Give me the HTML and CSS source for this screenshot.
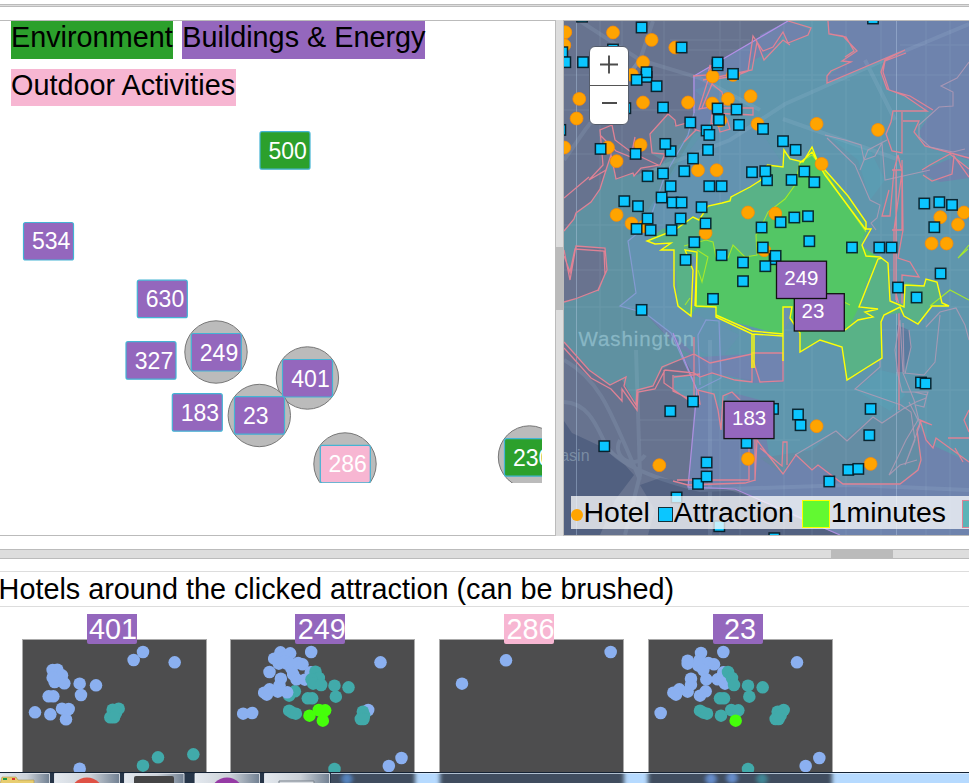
FILE: index.html
```html
<!DOCTYPE html>
<html lang="en">
<head>
<meta charset="utf-8">
<title>Attractions and hotels</title>
<link rel="stylesheet" href="styles.css">
</head>
<body>
<svg class="defs" width="0" height="0">
  <defs>
    <marker id="hotel" markerUnits="userSpaceOnUse" markerWidth="16" markerHeight="16" viewBox="-8 -8 16 16"><circle cx=".3" cy=".2" r="6.4" fill="#ffa400" stroke="#ff8c00" stroke-opacity=".8"/></marker>
    <marker id="sight" markerUnits="userSpaceOnUse" markerWidth="14" markerHeight="14" viewBox="-7 -7 14 14"><rect x="-4.900" y="-5" width="10.400" height="10.400" fill="#0bc6ff" stroke="#001018" stroke-opacity=".85" stroke-width="1.500"/></marker>
    <marker id="far" markerUnits="userSpaceOnUse" markerWidth="40" markerHeight="40" viewBox="-20 -20 40 40"><circle r="18.8" fill="#8bb0f0"/></marker>
    <marker id="mid" markerUnits="userSpaceOnUse" markerWidth="40" markerHeight="40" viewBox="-20 -20 40 40"><circle r="18.8" fill="#41aaaa"/></marker>
    <marker id="near" markerUnits="userSpaceOnUse" markerWidth="40" markerHeight="40" viewBox="-20 -20 40 40"><circle r="18.8" fill="#45ff0a"/></marker>
  </defs>
</svg>
<div class="top-split"></div>
<main class="views">
  <section class="graph">
    <div class="cats"><span class="cat green">Environment</span><span class="cat purple">Buildings &amp; Energy</span><span class="cat pink">Outdoor Activities</span></div>
    <svg class="nodes" width="542" height="377" viewBox="0 106 542 377">
      <g class="halo"><circle cx="216" cy="352" r="31.2"/><circle cx="307.4" cy="378" r="31.2"/><circle cx="259.3" cy="415.5" r="31.2"/><circle cx="345" cy="464" r="31.2"/><circle cx="529.5" cy="457" r="31.2"/></g>
      <g class="box purple-f">
        <rect x="23.5" y="222.5" width="50" height="37.5" rx="2"/><rect x="137.3" y="280.2" width="50" height="37.5" rx="2"/><rect x="126" y="341.7" width="50" height="37.5" rx="2"/><rect x="172.3" y="393.7" width="50" height="37.5" rx="2"/>
        <rect x="191.3" y="333.5" width="50" height="37.5" rx="2"/><rect x="282.5" y="359.5" width="50" height="37.5" rx="2"/><rect x="234.5" y="396.7" width="50" height="37.5" rx="2"/>
      </g>
      <g class="box green-f"><rect x="260" y="131.7" width="50" height="37.5" rx="2"/><rect x="504.5" y="438.7" width="50" height="37.5" rx="2"/></g>
      <g class="box pink-f"><rect x="320.3" y="445.3" width="50" height="37.5" rx="2"/></g>
      <g class="num">
        <text x="268.4" y="159">500</text><text x="32" y="249">534</text><text x="145.8" y="307">630</text><text x="134.8" y="369">327</text><text x="180.7" y="421">183</text><text x="199.8" y="360.7">249</text><text x="291.3" y="386.7">401</text><text x="243" y="423.7">23</text><text x="328.5" y="471.7">286</text><text x="513" y="465.7">230</text>
      </g>
    </svg>
  </section>
  <div class="v-split"><i></i></div>
  <section class="map">
    <svg class="canvas" width="405" height="514" viewBox="564 21 405 514">
      <rect x="564" y="21" width="405" height="514" fill="#67738f"/>
      <path fill="#516080" d="M564 421L572 433L600 446L625 465L634 475L615 500L600 535L564 535Z"/>
      <path fill="#536282" d="M648 535L655 510L640 485L660 478L720 487L760 500L850 535Z"/>
      <path fill="#6e83ad" d="M788 21L693 76L694 130L665 175L648 225L628 241L636 293L620 306L645 313L675 345L696 378L694 410L688 490L735 488L790 515L840 535L969 535L969 21Z"/>
      <path fill="#5f91a1" d="M564 231L574 219L576 213L591 202L600 189L606 170L611 158L616 179L633 173L634 176L660 166L683 139L693 131L700 132L694 175L660 222L628 241L636 293L620 306L645 313L675 345L690 354L662 369L653 386L636 392L637 405L622 380L610 385L590 370L564 342Z"/>
      <path fill="#66869b" d="M652 154L651 134L668 114L675 120L674 125L690 122L693 132L662 160Z"/>
      <path fill="#5f96ad" d="M706 128L694 134L664 185L628 241L636 293L620 306L645 313L685 345L694 354L710 363L752 354L752 380L783 382L783 362L784 382L752 383L745 380L720 373L700 377L673 375L674 391L700 404L697 390L710 393L721 410L730 392L760 400L770 460L783 474L795 455L810 469L820 465L845 484L900 484L918 470L922 460L917 425L932 445L969 462L969 160L950 154L925 146L919 132L933 110L927 111L905 96L886 89L881 72L886 60L905 50L827 83L827 76L848 63L842 61L857 51L843 36L829 34L828 21L788 21L810 30L808 35L788 43L783 35L773 50L754 60L746 72L732 76L718 79L712 88L722 93L717 107Z"/>
      <path fill="#6591b2" d="M694 90L712 84L722 92L717 107L706 128L670 178L648 225L628 241L636 293L620 306L645 313L685 345L720 360L740 335L678 306L674 249L647 241L693 217L730 198L760 180L780 160L760 130L730 120Z" opacity=".6"/>
      <path fill="#6f83ac" d="M922 170L940 163L954 157L969 168L969 178L940 182L925 175ZM788 21L810 30L808 35L788 43L783 35L773 50L762 50L760 35Z"/>
      <path fill="#67899f" d="M760 458L812 450L836 431L845 439L873 417L882 423L900 411L913 405L917 430L921 465L900 484L845 484L820 465L810 469L795 455L783 474Z" opacity=".7"/>
      <path fill="#69738f" d="M564 250L570 272L576 246L605 248L607 270L598 290L575 299L564 302Z"/>
      <path fill="#7084b0" d="M752 354L783 353L783 382L754 383ZM700 357L752 354L752 380L710 373Z"/>
      <path fill="#58a0b5" d="M855 390L880 370L897 374L905 395L890 411L870 399ZM828 136L870 150L885 180L870 200L858 160Z" opacity=".6"/>
      <path fill="#5b7b9f" d="M897 325L909 330L911 347L904 372L896 372Z"/>
      <g class="street">
        <path class="wide" d="M580 21L640 60L700 78L760 110M653 21L640 60L585 130L564 160M969 24L900 53L785 104L730 140L640 175M783 119L900 160M865 60L895 120"/>
        <path class="wide" d="M640 60L610 100M564 402C590 403 598 430 606 445S640 475 700 490L850 485L969 490M625 535L640 475L636 350M564 360C600 380 610 410 640 480M710 340V535M620 440A12 12 0 1 0 645 455"/>
        <path d="M600 21V340M622 21V340M664 21V340M720 21V535M740 21V535M784 21V535M812 21V535M846 21V535M881 21V535M926 21V535M950 21V535M564 75H969M564 110H700M564 154H969M740 80H850M564 307H969M620 390H969M640 440H800M564 270H969M760 235H969M640 420H760M564 225H800M670 40H750M670 50H750M900 45H969M760 330H969"/>
        <path class="seam" d="M576.500 21V535M896.500 21V535"/>
      </g>
      <g class="place"><text x="578.5" y="346" font-size="20.500">Washington</text><text x="549.500" y="460.500" font-size="16" class="water">Basin</text></g>
      <g class="violet">
        <path d="M788 21L694 76V113" stroke="#b48fe6"/>
        <path d="M694 113L688 135L665 175L648 225L628 241L636 293L620 306L645 313L671 333L697 390L721 378L719 321L706 320L698 335L700 385" stroke="#849bd2"/>
        <path d="M673 333L697 390L688 487L735 489L760 500L840 535" stroke="#ae8fdf"/>
      </g>
      <g class="rose">
        <path d="M589 180L603 165L600 130L612 125M589 180L606 170L611 155L616 179L633 173L634 176L641 168L660 165L665 154L652 153L650 134L668 114L675 120L676 126L690 122L696 130M600 135L616 151L631 157L635 137M612 125L615 140L631 152L658 165"/>
        <path d="M693 76L708 75L710 65L714 79L702 108L712 84L722 92L724 105L699 109L708 80L735 76L748 71L753 36L763 51L773 47L783 32L788 43L808 35L811 28L788 21M703 80L752 70L757 42L764 60L783 40L790 45M717 108L753 108V115L712 113L711 124L727 119L730 129L720 132L715 115M684 142L696 130L703 132"/>
        <path d="M828 21L829 34L843 36L857 51L842 61L851 62L831 71L827 76L827 83L905 50L885 60L881 72L887 89L905 96L927 111L893 111L891 122L886 134L892 151L902 153V112M906 53L885 61L883 72L889 90L910 96L933 110M830 34L846 37L854 51L845 57"/>
        <path d="M903 121L919 121L914 132L925 146L969 158M922 170L930 165L950 154L969 169M969 177L954 156L952 174L932 181L923 175"/>
        <path d="M889 190L882 216H890L894 170L898 155L902 172L894 230V286L899 305V410M902 160L903 230L898 258L910 262L919 277L902 275V304M892 170H902V230H892M896 170V300"/>
        <path d="M564 231L574 219L576 213L591 202L600 189L606 170M564 198L589 177M564 250L570 280L576 246L605 248L607 270L598 290L575 299L564 302M564 256L570 272L575 249L604 251L605 274L598 291"/>
        <path d="M564 342L589 370L610 385L626 377L624 386L636 405L637 390L653 386L662 367L694 354L710 363L752 354M564 348L591 378L611 389L622 401V389L637 410L638 392L655 389L665 370L694 373L700 377L712 373L735 380L752 382L752 353H783V381L760 382L753 360M694 337V404L664 383V370M674 377L700 374M673 375V391L700 404L698 390L714 394L718 410L721 430L723 396L732 392L740 400"/>
        <path d="M673 481L688 485L745 483L755 480L757 440L768 455L783 474L796 455L812 470L818 465L843 484L900 484L918 470L921 460L917 430L921 421L932 425L920 420L926 440L933 448L936 438L969 462M749 438V480L677 480M760 448L782 466L783 442H787V465M755 439V481M969 410L964 420L969 432M948 438H969M955 448L963 462"/>
      </g>
      <g class="mauve">
        <path d="M969 62L957 78L941 86L953 92V106L939 107L919 125L919 137L930 147L953 152L965 149"/>
        <path d="M795 455L836 431L847 441L873 417L882 423L903 409L916 402L926 398L928 392H902L898 375L895 350L900 320L903 373L914 400L920 425L905 465L915 440L911 412L901 405L855 389L880 367V345M903 323L904 372M909 330L911 347L905 374M926 327L940 312L956 308L965 325L969 340M940 315L935 362L924 375L904 373M914 392L927 395L924 407L916 405"/>
        <path d="M825 135L845 140L861 145L864 160L875 156L882 143L885 180L930 170M827 138L855 165L870 200L880 205L877 218L871 223L876 230M860 170L868 150L887 140M909 402L918 420L906 440L894 465L889 475L900 465L917 460"/>
      </g>
      <path fill="#59b287" d="M647 241L662 229L675 226L693 217L699 220L708 206L722 203L731 197L750 187L758 183L767 165L783 166L784 150L790 159L803 162L812 147L825 170L848 196L866 222L868 232L862 245L866 255L880 257L888 263L889 301L904 304L905 282L924 286L926 279L937 282L942 303L949 306L932 306L918 324L901 313L884 315L881 322L882 358L866 368L847 380L842 347L820 340L800 352L800 333L790 318L783 307L783 335L716 317L716 307L696 308L691 316L678 306L674 249L661 250L670 243Z"/>
      <path fill="#53c665" d="M706 240L713 242L716 257L728 258L733 245L745 257L757 255L756 235L762 225L780 203L795 185L800 162L812 155L820 165L840 195L866 230L860 245L878 257L865 285L859 307L849 327L800 333L783 307L783 335L716 317L716 307L696 308L698 250L688 247Z"/>
      <path fill="#6a91b0" d="M692 255L698 260L696 306H690ZM784 308L791 307L790 320L784 330Z"/>
      <path class="lime" d="M684 246L706 240L713 242L716 257L728 258L733 245L745 257L757 255L756 235L762 225L768 212L785 199L795 185L800 162L812 155L820 165L840 195L866 232M697 250L708 257L702 282L698 270M685 305L690 298M820 290L850 305M969 245L958 258L968 249M930 306L950 290L969 300"/>
      <path class="yellow" d="M767 165L783 167L784 150L790 159L803 162L812 147L817 160L825 170L848 196L866 222V229L871 229L862 245L866 256L880 257L888 263L890 301L904 307L905 285L924 286L926 279L937 282L942 303L949 306L932 306L918 324L904 316L900 307L884 315L881 322L882 358L866 368L847 380L842 347L820 340L800 352L800 333L790 318L792 307L783 307V361M767 165L761 180L750 187L731 197L730 201L722 203L708 206L699 220L693 217L675 230L647 241L655 244L671 243L661 250H674L674 286L678 306L691 316L693 270L685 250L697 252L696 306L716 307V317L752 334L783 336M800 163L812 152L825 175L866 230M697 252L695 306M882 258L878 259L859 307L878 309L865 312L873 317L858 320L845 330M752 334V368M754 335V368M716 315L752 331L783 334"/>
      <polyline class="pts hotel" points="612.700,32.300 651.300,39.700 675,47.300 565,32 564,45 642.700,62 631.700,74.700 579,98.700 576.300,118.300 642.700,102.300 687.700,102.300 712.300,76.300 732.700,74.700 712,103.300 727.700,98.700 750.300,96 757.300,123.700 564,147.300 607.700,147.300 616.300,161 640.300,144.700 697.700,170 716.300,170 720,120 816.300,123.700 877.700,129.700 821.300,163.700 616.300,214.700 631.300,223.300 644,226 747.700,212.300 705.300,232.700 764,250 775,213.300 940,217 963.700,212.300 957.700,224.300 931.300,243.300 946.300,243.300 659,465 747.700,458.700 816.300,426 870.300,463.700"/>
      <polyline class="pts sight" points="581.700,16.500 641.300,27.300 681.300,47.300 562,52 565,62 582.700,62 612.700,49.300 646.300,76.700 646.300,72 636.300,79.700 656.300,86 662.700,107.300 625,108 717.300,65 717.300,62.300 732.700,73.700 717.300,108.300 736.300,109.300 718.700,119.700 738.700,124.700 690,122.300 706.300,130.300 709,134.700 762.700,128.700 707.700,149.700 692.700,158.300 600.300,148.700 635.300,153.700 670.300,151 665,143.700 560,129.700 684,171 662.700,173.300 647.300,176 751.700,172 766.700,180 765,171 872.700,18.300 782.700,141 795.300,149.700 804,171.300 814,182 791.300,179.700 670.300,186 709,186 721.300,186 661.300,197.300 672.300,202.300 681.300,202.300 701.300,207 624,201 637.700,206 647.300,218.300 636.300,228.700 650.300,230 671.300,230 680.300,218.300 705.300,223.300 694,242 685.300,259.700 721.300,255 742.700,262.300 742.700,281 712.700,298.700 641.300,309.700 761.300,227.300 780.300,222 794,217.300 807.700,216 809,241 762.500,247.300 774.300,259 775.300,255.700 765,266 851.700,247.300 879,247.300 891.300,247.300 924,203.300 939,202 951.700,204.700 934,227 940.300,273.300 897.700,287.300 916.300,297.300 670,411 692.700,401.300 604,446 706.300,462.300 697.700,483.700 706.300,476.300 746.300,442.700 676.300,497.300 719,526 772.700,408.700 797.700,414.300 800.300,425 870.300,408.700 869,435 920.700,382.300 925.300,383.300 848,469.700 858,468.700 829,481.300 774,538"/>
      <g class="tag"><rect x="794.300" y="293.700" width="50" height="37.300"/><text x="801.500" y="318">23</text><rect x="776.500" y="261.200" width="50" height="37.300"/><text x="784.300" y="284.500">249</text><rect x="724" y="401.300" width="50" height="37.300"/><text x="732" y="425">183</text></g>
    </svg>
    <div class="zoomer">
      <svg width="38" height="38" viewBox="0 0 38 38"><path d="M10 17.500H28M19 8.500V26.500"/></svg>
      <svg width="38" height="38" viewBox="0 0 38 38"><path d="M12 17H27"/></svg>
    </div>
    <div class="legend"><i class="dot"></i><span class="hot">Hotel</span><i class="sq"></i><span class="attr">Attraction</span><i class="zone one"></i><span class="mins">1minutes</span><i class="zone second"></i></div>
  </section>
</main>
<div class="h-split"><i></i></div>
<section class="hotels">
  <h1>Hotels around the clicked attraction (can be brushed)</h1>
  <div class="charts">
    <figure class="chart">
      <figcaption class="purple">401</figcaption>
      <svg width="185" height="133" viewBox="65 116 555 399">
        <polyline class="pts far" points="104,336 150,342 197,357 205,326 185,325 145,288 159,288 242,284 287,255 238,250 157,209 171,208 185,225 157,232 163,245 192,249 400,179 428,155 523,186 238,505"/>
        <polyline class="pts mid" points="355,325 337,328 347,338 330,351 341,351 428,496 473,471 579,462"/>
      </svg>
    </figure>
    <figure class="chart">
      <figcaption class="purple">249</figcaption>
      <svg width="185" height="133" viewBox="60.5 116 555 399">
        <polyline class="pts mid" points="255,273 238,286"/>
        <polyline class="pts far" points="100,340 127,338 179,215 193,175 212,156 225,170 241,159 207,190 230,190 225,183 245,205 240,190 265,188 278,192 250,222 260,237 285,238 303,216 304,155 213,235 209,255 179,267 163,277 171,283 204,274 232,276 512,186 475,329 537,497 575,473"/>
        <polyline class="pts mid" points="317,214 327,233 305,237 310,250 334,254 374,256 416,261 378,289 294,294 307,294 238,331 247,337 258,340 459,334 463,345 453,356 461,356 374,506"/>
        <polyline class="pts near" points="327,329 346,330 299,346 339,361"/>
      </svg>
    </figure>
    <figure class="chart">
      <figcaption class="pink">286</figcaption>
      <svg width="185" height="133" viewBox="57 116 555 399"><polyline class="pts far" points="126,250 258,180 572,155"/></svg>
    </figure>
    <figure class="chart">
      <figcaption class="purple short">23</figcaption>
      <svg width="185" height="133" viewBox="54 116 555 399">
        <polyline class="pts far" points="92,338 173,181 173,190 213,158 208,180 205,196 220,190 235,188 252,192 220,209 229,237 183,235 183,253 148,267 130,277 138,283 173,274 210,286 227,273 263,237 280,216 285,250 275,232 280,155 501,186 527,497 568,473"/>
        <polyline class="pts mid" points="294,215 306,233 312,254 354,256 398,261 358,289 270,294 282,294 210,331 220,337 231,340 273,346 304,329 325,330 461,329 443,334 452,345 437,356 446,356 354,506"/>
        <polyline class="pts near" points="317,361"/>
      </svg>
    </figure>
  </div>
</section>
<footer class="taskbar">
  <svg width="969" height="11" viewBox="0 772 969 11">
    <defs><filter id="glass" x="-5%" width="110%" y="-50%" height="200%"><feGaussianBlur stdDeviation="2 1"/></filter>
    <linearGradient id="btn"><stop offset="0" stop-color="#e4e9ef"/><stop offset=".55" stop-color="#cbd1d8"/><stop offset="1" stop-color="#718092"/></linearGradient></defs>
    <rect y="772" width="969" height="11" fill="#b6daff"/>
    <g filter="url(#glass)"><path fill="#3f4d5e" d="M22 768H206V790H22ZM231 768H415V790H231ZM440 768H624V790H440ZM648 768H832V790H648Z"/><circle cx="347" cy="779" r="5" fill="#5583bd"/><circle cx="711" cy="779" r="5" fill="#668dcb"/><circle cx="732" cy="778" r="5" fill="#668dcb"/><circle cx="762" cy="779" r="5" fill="#418695"/></g>
    <path fill="#263548" d="M0 773H331V783H0Z"/>
    <g fill="url(#btn)" stroke="#f2f5fa" stroke-width=".8"><path d="M-1 773.500H49.500V785H-1Z"/><path d="M54.500 773.500H119.500V785H54.500Z"/><path d="M124.500 773.500H184V785H124.500Z"/><path d="M195 773.500H259.500V785H195Z"/><path d="M264.500 773.500H329.500V785H264.500Z"/></g>
    <path fill="#e8cd70" stroke="#a48a39" stroke-width=".5" d="M2 777H16L18 780H34V784H0Z"/><path fill="#21994c" d="M3 778H7V780H3Z"/><path fill="#d33" d="M12 778H15V780H12Z"/>
    <circle cx="87" cy="794" r="16.500" fill="#df5145"/><rect x="134" y="776" width="40" height="12" rx="2" fill="#454546"/><circle cx="227" cy="794" r="16.500" fill="#963ba5"/><path fill="#d9dde2" stroke="#79818b" d="M279 781H314V785H279Z"/>
    <path stroke="#142234" d="M0 772.500H969"/><path stroke="#dff0ff" stroke-opacity=".7" d="M331 773.500H969"/>
  </svg>
</footer>
</body>
</html>
```

FILE: styles.css
```css
* { box-sizing: border-box; }
body { margin: 0; height: 783px; overflow: hidden; display: flex; flex-direction: column; background: #fff; color: #000; font: 28.8px/33px "Liberation Sans", Arial, sans-serif; }
svg { display: block; }
.defs { position: absolute; }
.top-split { flex: none; height: 3px; margin: 4px 0 13px; background: #ddd; border: solid #bbb; border-width: 1px 0; }
.views { flex: none; display: flex; height: 516px; }
.graph { width: 555px; border: solid #bbb; border-width: 1px 0; overflow: hidden; }
.cats { height: 85px; padding-left: 11px; display: flex; flex-wrap: wrap; gap: 10px 9.5px; align-content: flex-start; }
.cat { height: 38px; line-height: 33px; white-space: nowrap; }
.cat.pink { height: 37px; width: 225px; }
.green { background: #2ca02c; }
.purple { background: #9467bd; }
.pink { background: #f7b6d2; }
.green-f { fill: #2ca02c; }
.purple-f { fill: #9467bd; }
.pink-f { fill: #f7b6d2; }
.box { stroke: #44b4d4; stroke-width: 1.2; }
.halo { fill: #bbb; stroke: #777; }
.num { fill: #fff; font-size: 23px; }
.v-split { width: 9px; display: flex; align-items: center; background: #ddd; border: solid #bbb; border-width: 0 1px; }
.v-split i { width: 100%; height: 63px; background: #bbb; }
.map { position: relative; width: 405px; border: solid #bbb; border-width: 1px 0; overflow: hidden; }
.street { fill: none; stroke: #b8d0e8; stroke-opacity: .09; stroke-width: 1.5; }
.street .wide { stroke-width: 4; stroke-opacity: .13; }
.street .seam { stroke-width: 1; stroke-opacity: .4; }
.place { fill: #8fbdcb; fill-opacity: .85; letter-spacing: .9px; stroke: #8fbdcb; stroke-width: .4; stroke-opacity: .6; }
.place .water { fill: #8194aa; letter-spacing: 0; stroke: none; }
.violet { fill: none; stroke-width: 1.2; }
.rose { fill: none; stroke: #df8295; stroke-width: 1.3; }
.mauve { fill: none; stroke: #b79bb5; stroke-opacity: .8; stroke-width: 1.1; }
.lime { fill: none; stroke: #a5e82d; stroke-width: 1.1; }
.yellow { fill: none; stroke: #ffff05; stroke-width: 1.4; }
.pts { fill: none; stroke: none; }
.hotel { marker: url(#hotel); }
.sight { marker: url(#sight); }
.far { marker: url(#far); }
.mid { marker: url(#mid); }
.near { marker: url(#near); }
.tag { font-size: 20.5px; }
.tag rect { fill: #9467bd; stroke: #111; stroke-width: 1.3; }
.tag text { fill: #fff; }
.zoomer { position: absolute; left: 25px; top: 25px; width: 40px; height: 79px; border: 1px solid #555d6c; border-radius: 6px; background: #fff; overflow: hidden; }
.zoomer svg { fill: none; stroke: #4c4c4c; stroke-width: 1.9; }
.zoomer svg + svg { border-top: 1px solid #555; height: 39px; }
.legend { position: absolute; left: 7px; top: 475px; width: 398px; height: 33px; display: flex; overflow: hidden; background: rgba(255,255,255,.74); font-size: 28.4px; line-height: 33px; white-space: nowrap; }
.legend i { flex: none; }
.dot { width: 12px; height: 12px; margin-top: 13px; border-radius: 50%; background: #ffa400; }
.hot { margin-left: .6px; }
.sq { width: 15px; height: 15px; margin: 11px 0 0 8.4px; background: #0bc6ff; border: 1px solid #14303a; }
.attr { margin-left: .6px; }
.zone { width: 28px; height: 28px; margin-top: 4px; border: 1px solid #ff0; background: #62f931; }
.one { margin-left: 8px; }
.mins { margin-left: 1px; }
.second { margin-left: 16px; background: #5bb3b7; border-color: #df8295; }
.h-split { flex: none; height: 10px; margin-top: 13px; background: #ddd; border: solid #bbb; border-width: 1px 0; }
.h-split i { display: block; width: 62px; height: 100%; margin-left: 831px; background: #bbb; }
.hotels { flex: none; height: 201px; margin-top: 12px; overflow: hidden; }
h1 { margin: 0; height: 36px; font: inherit; line-height: 34px; text-indent: -1.4px; border: solid #ddd; border-width: 1px 0; white-space: nowrap; }
.charts { display: flex; gap: 23.8px; padding: 32px 0 0 21.5px; }
.chart { flex: none; position: relative; margin: 0; width: 185px; height: 133px; background: #4d4d4e; }
.chart::after { content: ""; position: absolute; inset: 0; border: solid #aaa; border-width: 1px 1px 0; }
figcaption { position: absolute; z-index: 1; left: 65px; top: -25px; width: 50px; height: 30px; padding-left: 2.5px; line-height: 31px; border-radius: 0 0 2px 2px; color: #fff; overflow: hidden; }
figcaption.short { padding-left: 11px; }
.taskbar { flex: none; height: 11px; overflow: hidden; }
```
